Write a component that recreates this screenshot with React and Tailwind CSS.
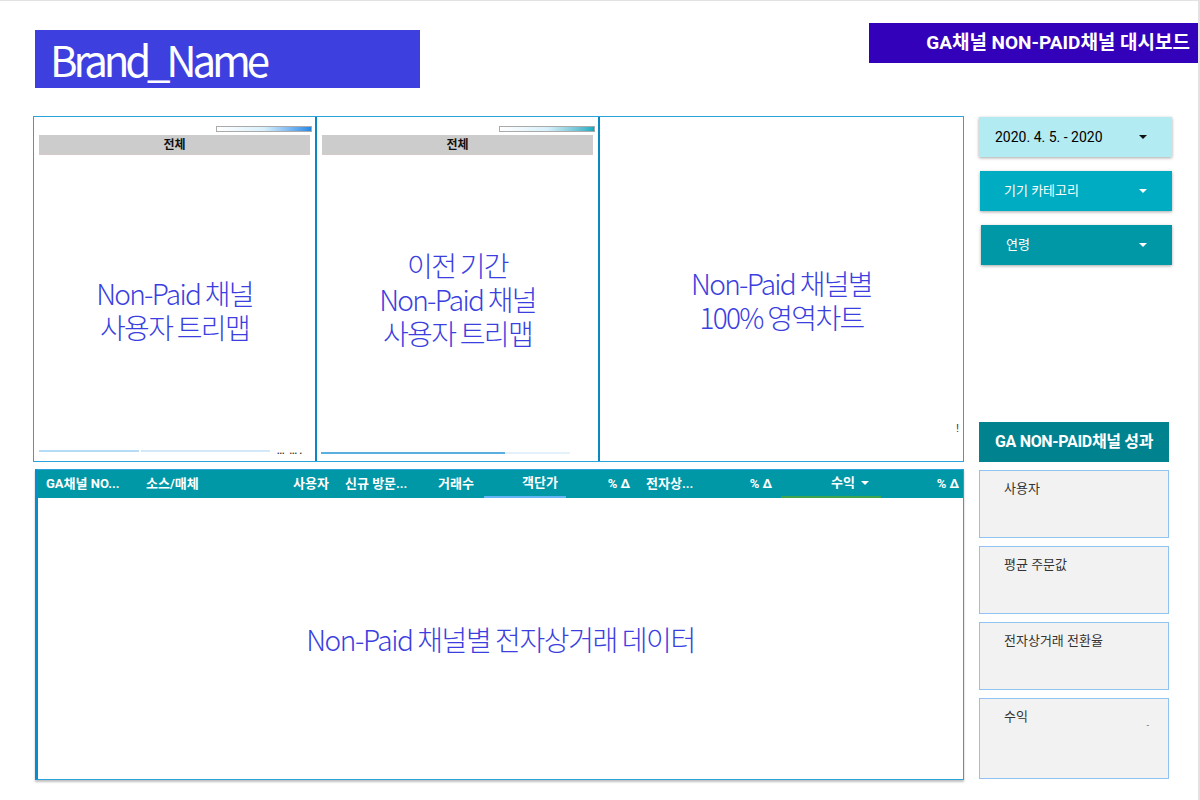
import React from 'react';

const KR = "font-['Roboto','Noto_Sans_CJK_KR',sans-serif]";
const THIN = "font-['Noto_Sans_CJK_KR','Noto_Sans',sans-serif]";

const Caret = ({ color = '#fff' }) => (
  <svg width="8" height="4" viewBox="0 0 8 4">
    <path d="M0 0 L8 0 L4 4 Z" fill={color} />
  </svg>
);

const Dropdown = ({ label, bg, text, caret, pl }) => (
  <div className={`h-[40px] flex items-center justify-between pr-[25px] shadow-[0_1px_3px_rgba(0,0,0,0.35)] ${bg} ${pl}`}>
    <span className={`${text} ${KR}`}>{label}</span>
    <Caret color={caret} />
  </div>
);

const Scorecard = ({ label, h, extra }) => (
  <div className={`${h} bg-[#f2f2f2] border border-[#8ec3f2] pl-[24px] pt-[4px] relative`}>
    <span className={`text-[13px] leading-[20px] text-[#333] ${KR}`}>{label}</span>
    {extra}
  </div>
);

const Legend = ({ to }) => (
  <div className="flex justify-end pr-[3px] pt-[9px]">
    <div className={`w-[96px] h-[6px] border border-[#aaa] bg-gradient-to-r from-white via-[#d8f0fb] ${to}`} />
  </div>
);

const HeaderBar = () => (
  <div className="mx-[5px] mt-[3px] h-[20px] bg-[#cccccc] border-b border-[#d8c9c9] flex items-center justify-center">
    <span className={`text-[12px] font-bold text-[#111] ${KR}`}>전체</span>
  </div>
);

const Placeholder = ({ lines, mt }) => (
  <div className={`${mt} flex flex-col items-center text-[28px] leading-[34px] font-light tracking-[-0.06em] text-[#3b3fe0] ${THIN}`}>
    {lines.map((l) => (
      <div key={l} className="h-[34px] overflow-visible whitespace-nowrap">{l}</div>
    ))}
  </div>
);

const cols = [
  { t: 'GA채널 NO...', c: 'w-[100px] pl-[8px]' },
  { t: '소스/매체', c: 'w-[140px] pl-[8px]' },
  { t: '사용자', c: 'w-[58px] justify-end pr-[7px]' },
  { t: '신규 방문...', c: 'w-[95px] pl-[9px]' },
  { t: '거래수', c: 'w-[53px] pl-[7px]' },
  { t: '객단가', c: 'w-[82px] justify-end pr-[8px] border-b-2 border-[#64b5f6]' },
  { t: '% Δ', c: 'w-[72px] justify-end pr-[8px]' },
  { t: '전자상...', c: 'w-[73px] pl-[8px]' },
  { t: '% Δ', c: 'w-[70px] justify-end pr-[9px]' },
  { t: '수익', c: 'w-[100px] justify-end pr-[12px] border-b-2 border-[#3fa34d]', caret: true },
  { t: '% Δ', c: 'flex-1 justify-end pr-[4px]' },
];

export default function App() {
  return (
    <div className="w-[1200px] h-[800px] bg-white border-t border-r-2 border-[#e2e2e2] overflow-hidden">
      {/* top bar */}
      <div className="flex justify-between items-start">
        <div className="ml-[35px] mt-[29px] w-[385px] h-[58px] bg-[#3d3fdf] flex items-center pl-[15px]">
          <span className={`text-[42px] leading-[50px] text-white font-normal tracking-[-0.1em] ${THIN}`}>Brand_Name</span>
        </div>
        <div className="mt-[22px] w-[329px] h-[40px] bg-[#3401bb] flex items-center justify-end pr-[8px]">
          <span className={`text-[19px] font-bold text-white ${KR}`}>GA채널 NON-PAID채널 대시보드</span>
        </div>
      </div>

      <div className="flex mt-[28px]">
        {/* left column */}
        <div className="ml-[33px] w-[931px] flex flex-col">
          <div className="h-[346px] flex border border-[#2aa3dc]">
            <div className="w-[281px] flex flex-col">
              <Legend to="to-[#1e88e5]" />
              <HeaderBar />
              <Placeholder lines={['Non-Paid 채널', '사용자 트리맵']} mt="mt-[121px]" />
              <div className="mt-auto mb-[7px] mx-[5px] flex items-center gap-[2px]">
                <div className="w-[100px] h-[2px] bg-[#b5dbf7]" />
                <div className="w-[129px] h-[2px] bg-[#d3e9fa]" />
                <span className="ml-[5px] text-[9px] leading-[6px] font-bold text-[#333] font-['Liberation_Sans',sans-serif]">... &nbsp;... .</span>
              </div>
            </div>
            <div className="w-[283px] border-l-2 border-[#0b88c2] flex flex-col">
              <Legend to="to-[#00acc1]" />
              <HeaderBar />
              <Placeholder lines={['이전 기간', 'Non-Paid 채널', '사용자 트리맵']} mt="mt-[93px]" />
              <div className="mt-auto mb-[7px] mx-[4px] flex items-center">
                <div className="w-[184px] h-[2px] bg-[#5aaee0]" />
                <div className="w-[65px] h-[2px] bg-[#e3f1fb]" />
              </div>
            </div>
            <div className="flex-1 border-l-2 border-[#0b88c2] flex flex-col">
              <Placeholder lines={['Non-Paid 채널별', '100% 영역차트']} mt="mt-[149px]" />
              <div className="mt-auto mb-[28px] flex justify-end pr-[4px]">
                <span className="text-[11px] leading-[10px] text-[#333] font-['Liberation_Sans',sans-serif]">!</span>
              </div>
            </div>
          </div>

          {/* table */}
          <div className="mt-[7px] ml-[2px] h-[311px] border border-[#2aa3dc] border-l-[3px] border-l-[#0a8ccc] flex flex-col shadow-[0_2px_2px_rgba(0,0,0,0.25)]">
            <div className="h-[28px] bg-[#0097a7] flex">
              {cols.map((c, i) => (
                <div key={i} className={`h-full flex items-center gap-[6px] ${c.c}`}>
                  <span className={`text-[13px] font-bold text-white whitespace-nowrap ${KR}`}>{c.t}</span>
                  {c.caret && <Caret />}
                </div>
              ))}
            </div>
            <div className="flex-1 flex items-center justify-center">
              <span className={`text-[28px] font-light tracking-[-0.05em] text-[#3b3fe0] ${THIN}`}>
                Non-Paid 채널별 전자상거래 데이터
              </span>
            </div>
          </div>
        </div>

        {/* right column */}
        <div className="ml-[15px] w-[193px] flex flex-col">
          <div className="mt-[1px] flex flex-col gap-[14px]">
            <Dropdown label="2020. 4. 5. - 2020" bg="bg-[#b3ebf2]" text="text-[14px] text-black" caret="#111" pl="pl-[16px]" />
            <Dropdown label="기기 카테고리" bg="bg-[#00acc1] ml-[1px]" text="text-[13px] text-white" caret="#fff" pl="pl-[24px]" />
            <Dropdown label="연령" bg="bg-[#0097a7] ml-[2px]" text="text-[13px] text-white" caret="#fff" pl="pl-[25px]" />
          </div>

          <div className="mt-[157px] w-[190px] h-[40px] bg-[#00838f] flex items-center pl-[16px]">
            <span className={`text-[16px] font-bold text-white tracking-[-0.02em] ${KR}`}>GA NON-PAID채널 성과</span>
          </div>
          <div className="w-[190px] mt-[8px] flex flex-col gap-[8px]">
            <Scorecard label="사용자" h="h-[68px]" />
            <Scorecard label="평균 주문값" h="h-[68px]" />
            <Scorecard label="전자상거래 전환율" h="h-[68px]" />
            <Scorecard
              label="수익"
              h="h-[81px]"
              extra={<span className="absolute right-[19px] top-[20px] text-[8px] text-[#666]">-</span>}
            />
          </div>
        </div>
      </div>
    </div>
  );
}
